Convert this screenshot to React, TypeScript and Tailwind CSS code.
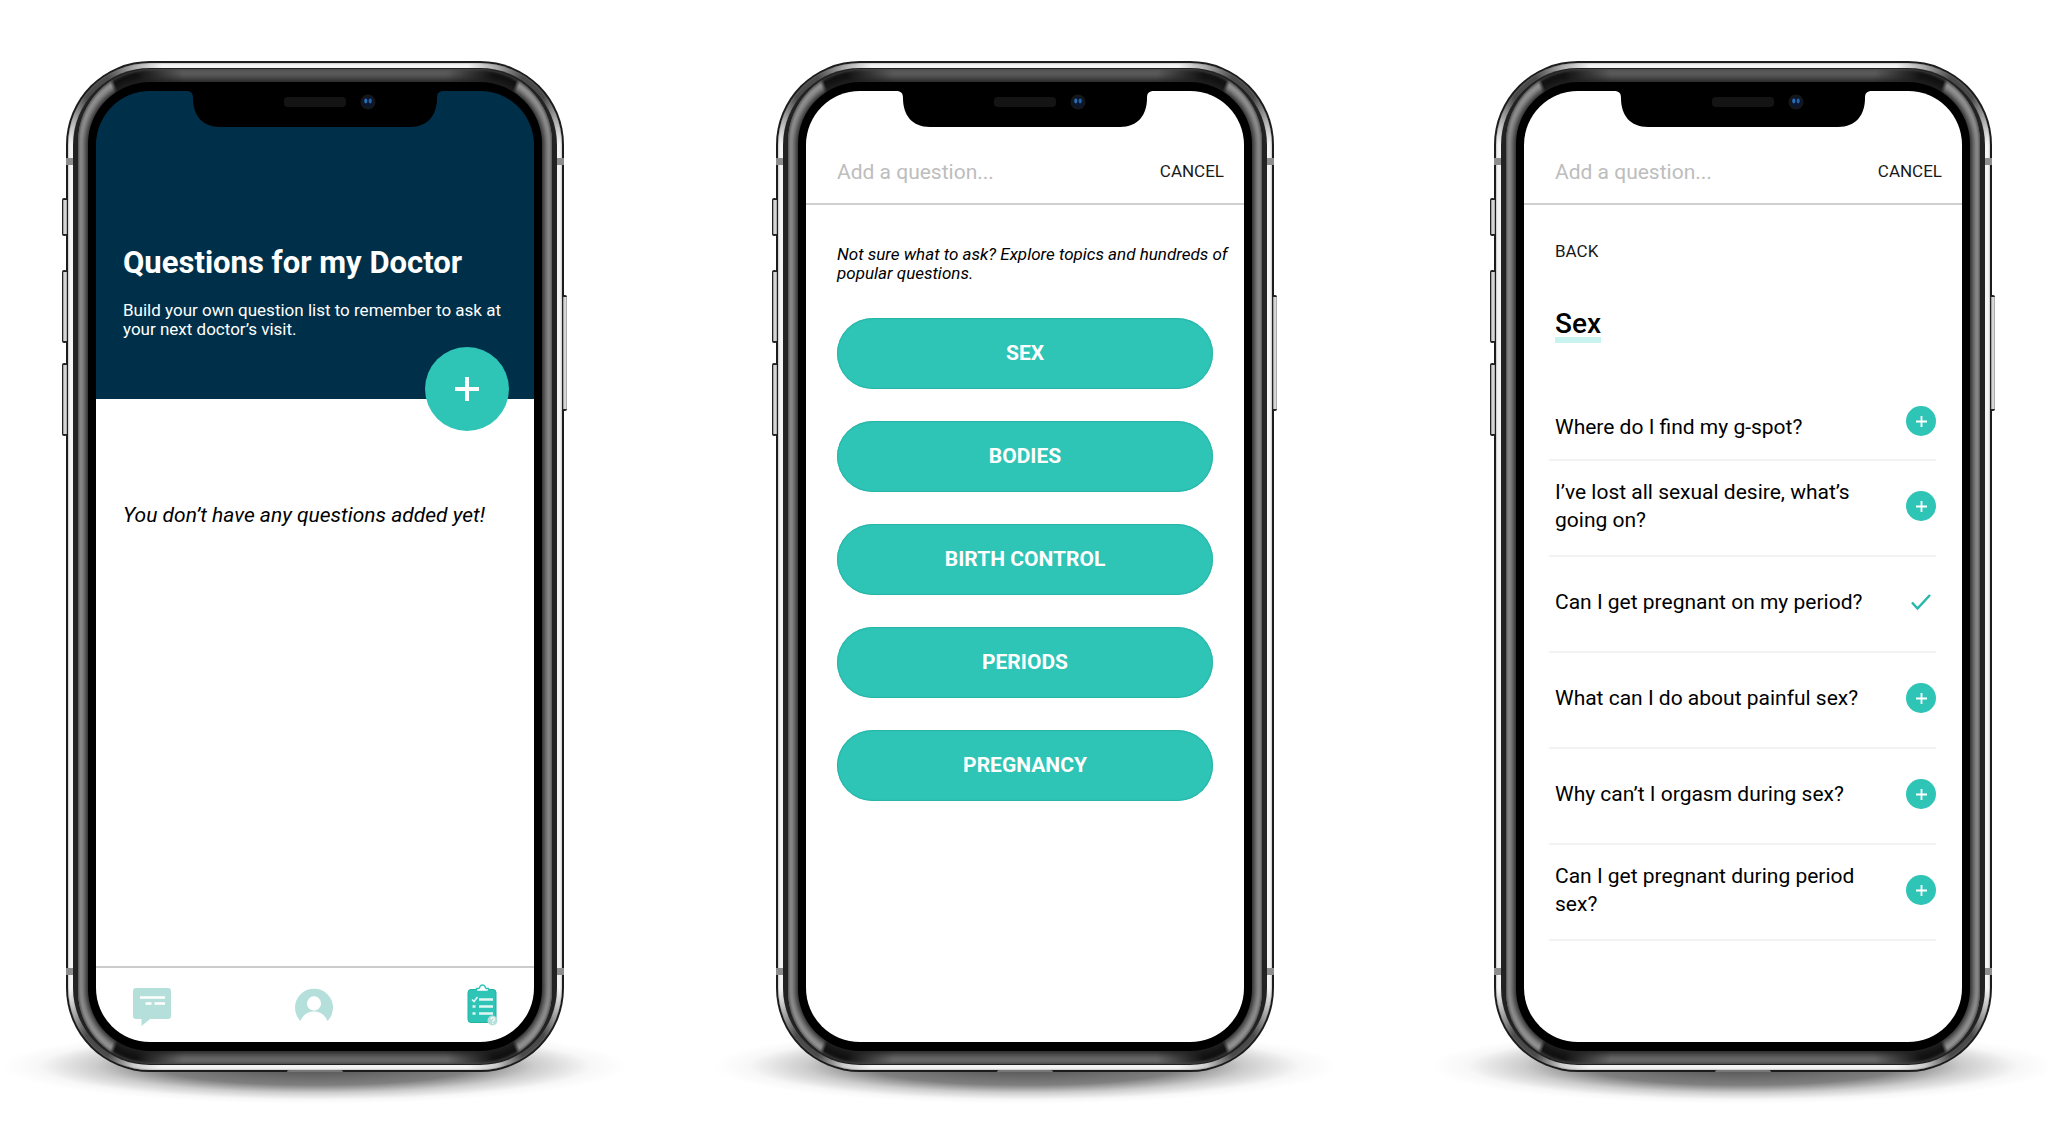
import React from "react";

const topics = ["SEX", "BODIES", "BIRTH CONTROL", "PERIODS", "PREGNANCY"];

const questions = [
  { text: "Where do I find my g-spot?", added: false },
  { text: "I’ve lost all sexual desire, what’s going on?", added: false },
  { text: "Can I get pregnant on my period?", added: true },
  { text: "What can I do about painful sex?", added: false },
  { text: "Why can’t I orgasm during sex?", added: false },
  { text: "Can I get pregnant during period sex?", added: false },
];

function Notch() {
  return (
    <svg className="absolute top-0 left-1/2 h-9 w-[258px] -translate-x-1/2" viewBox="0 0 258 36" aria-hidden="true">
      <path d="M0 0 H258 C253 0 251 2 251 7 C251 24 242 36 224 36 H34 C16 36 7 24 7 7 C7 2 5 0 0 0 Z" fill="#000" />
      <rect x="98" y="6" width="62" height="10" rx="4" fill="#141414" />
      <circle cx="182" cy="11" r="7.5" fill="#15171b" />
      <circle cx="182" cy="11" r="5" fill="#0a1730" />
      <ellipse cx="179.800" cy="10" rx="1.600" ry="2.400" fill="#2a6fb5" />
      <ellipse cx="184.200" cy="10" rx="1.600" ry="2.400" fill="#2461a5" />
    </svg>
  );
}

function SideKey({ place }: { place: string }) {
  return (
    <div
      className={
        "absolute w-[5px] rounded-[2px] border-y-2 border-l border-[#222] bg-linear-to-r from-[#888] via-[#eee] to-[#999] " + place
      }
    />
  );
}

function Phone({ surface, children }: { surface: string; children: React.ReactNode }) {
  return (
    <div className="relative isolate w-full max-w-[498px]">
      <div className="absolute -inset-x-16 -bottom-8 -z-10 h-[76px] bg-[radial-gradient(closest-side,rgba(0,0,0,0.7),rgba(0,0,0,0.5)_50%,rgba(0,0,0,0.2)_70%,rgba(0,0,0,0.03)_88%,transparent)]" />
      <SideKey place="-left-1 top-[137px] h-[38px]" />
      <SideKey place="-left-1 top-[209px] h-[73px]" />
      <SideKey place="-left-1 top-[302px] h-[73px]" />
      <SideKey place="-right-[3px] top-[234px] h-[116px]" />
      <div className="rounded-[84px] bg-[#1c1c1c] p-[2px]">
        <div className="rounded-[82px] bg-[conic-gradient(#f4f4f4_0deg_17deg,#aaa_20deg,#4a4a4a_23deg_26deg,#f4f4f4_30deg_150deg,#4a4a4a_154deg_157deg,#ccc_160deg,#f4f4f4_163deg_197deg,#ccc_200deg,#4a4a4a_203deg_206deg,#f4f4f4_210deg_330deg,#4a4a4a_334deg_337deg,#aaa_340deg,#f4f4f4_343deg)] p-[5px] shadow-[inset_0_0_2px_#777]">
          <div className="rounded-[77px] bg-[#222] px-[5px] py-px">
            <div className="rounded-[73px] bg-[conic-gradient(#5c5c5c_0deg_15deg,#111_20deg_22.5deg,#999_23deg_157deg,#111_157.5deg_160deg,#6a6a6a_165deg_195deg,#111_200deg_202.5deg,#999_203deg_337deg,#111_337.5deg_340deg,#5c5c5c_345deg)] px-[10px] py-[13px] shadow-[inset_0_0_3px_1px_#444]">
              <div className="rounded-[62px] bg-black px-2 py-[9px] shadow-[0_0_6px_3px_#222]">
                <div className={"relative flex h-[951px] flex-col overflow-hidden rounded-[54px] " + surface}>
                  {children}
                  <Notch />
                </div>
              </div>
            </div>
          </div>
        </div>
      </div>
      <div className="absolute top-[97px] left-0 h-[7px] w-[7px] bg-[#8d8d8d]" />
      <div className="absolute top-[97px] right-0 h-[7px] w-[7px] bg-[#8d8d8d]" />
      <div className="absolute bottom-[97px] left-0 h-[7px] w-[7px] bg-[#8d8d8d]" />
      <div className="absolute right-0 bottom-[97px] h-[7px] w-[7px] bg-[#8d8d8d]" />
      <div className="absolute bottom-0 left-1/2 h-[2px] w-14 -translate-x-1/2 rounded-t bg-[#777]" />
    </div>
  );
}

function PlusIcon({ className, weight }: { className: string; weight: number }) {
  return (
    <svg className={className} viewBox="0 0 24 24" fill="none" stroke="#fff" strokeWidth={weight} aria-hidden="true">
      <path d="M12 0V24M0 12H24" />
    </svg>
  );
}

function ChatIcon() {
  return (
    <svg className="h-[38px] w-[38px]" viewBox="0 0 38 38" aria-hidden="true">
      <path d="M3 0H35Q38 0 38 3V28Q38 31 35 31H17L8.500 38V31H3Q0 31 0 28V3Q0 0 3 0Z" fill="#b5dfdb" />
      <path d="M7 9.500H32M12.500 15.500H18.500M21.500 15.500H32" stroke="#fff" strokeWidth="2.500" />
    </svg>
  );
}

function PersonIcon() {
  return (
    <svg className="h-[33px] w-[38px]" viewBox="0 0 38 33" aria-hidden="true">
      <path d="M5.500 33A19 19 0 1 1 32.500 33C30 27 25.500 23.500 19 23.500S8 27 5.500 33Z" fill="#b5dfdb" />
      <ellipse cx="19" cy="15.500" rx="7" ry="7.200" fill="#fff" />
    </svg>
  );
}

function ListIcon() {
  return (
    <svg className="h-[42px] w-[31px]" viewBox="0 0 31 42" aria-hidden="true">
      <rect x="1" y="5.500" width="28" height="33" rx="3" fill="#2ec4b6" stroke="#22b3a5" />
      <path
        d="M9.500 7.500V4.500H12C12.500 4.500 12.500 3.500 13 2.500C14 .5 17 .5 18 2.500C18.500 3.500 18.500 4.500 19 4.500H21.500V7.500Z"
        fill="#fff"
        stroke="#2ec4b6"
        strokeWidth="1.500"
      />
      <path d="M12 15.500H26M12 22.500H26M12 29.500H26" stroke="#e2f7f4" strokeWidth="2.500" />
      <path d="M5 15.500L7 17.500L10.500 13" fill="none" stroke="#e2f7f4" strokeWidth="1.600" />
      <path d="M5.500 22.500H8.500M5.500 29.500H8.500" stroke="#e2f7f4" strokeWidth="2.500" />
      <circle cx="25.500" cy="36.500" r="5" fill="#b5dfdb" />
      <path
        d="M24 35.200C24 33 27.300 33.200 27.300 35.200C27.300 36.500 25.700 36.500 25.700 38M25.700 38.800V39.800"
        fill="none"
        stroke="#fff"
        strokeWidth="1.200"
      />
    </svg>
  );
}

function DoctorScreen() {
  return (
    <Phone surface="bg-transparent">
      <header className="relative flex h-[308px] flex-col bg-[#003049] px-[27px] pt-[152px] text-white">
        <h1 className="text-[31px] leading-10 font-bold">Questions for my Doctor</h1>
        <p className="mt-[18px] text-[17px] leading-[19px]">
          Build your own question list to remember to ask at your next doctor’s visit.
        </p>
        <button
          type="button"
          aria-label="Add a question"
          className="absolute right-[25px] -bottom-8 flex size-[84px] items-center justify-center rounded-full bg-[#2ec4b6]"
        >
          <PlusIcon className="size-6" weight={4} />
        </button>
      </header>
      <p className="grow bg-white px-[27px] pt-[102px] text-[21px] leading-7 italic">
        You don’t have any questions added yet!
      </p>
      <nav className="grid h-[76px] grid-cols-[163fr_163fr_110fr] items-start border-t-2 border-[#ccc] bg-white pl-[37px]">
        <a href="#chat" aria-label="Chat" className="justify-self-start pt-5">
          <ChatIcon />
        </a>
        <a href="#profile" aria-label="Profile" className="justify-self-start pt-5 pl-3">
          <PersonIcon />
        </a>
        <a href="#questions" aria-label="My questions" className="justify-self-end pt-4 pr-9">
          <ListIcon />
        </a>
      </nav>
    </Phone>
  );
}

function AskBar() {
  return (
    <form className="flex h-[114px] shrink-0 items-end justify-between border-b-2 border-[#d0d0d0] pr-5 pb-[15px] pl-[31px]">
      <input
        type="text"
        aria-label="Question"
        placeholder="Add a question..."
        className="h-8 w-60 bg-transparent text-[21px] outline-none placeholder:text-[#bdbdbd]"
      />
      <button type="button" className="h-8 text-[17px] text-[#1a1a1a]">
        CANCEL
      </button>
    </form>
  );
}

function TopicsScreen() {
  return (
    <Phone surface="bg-white">
      <AskBar />
      <p className="pt-10 pr-3 pl-[31px] text-[17px] leading-[19px] italic">
        Not sure what to ask? Explore topics and hundreds of popular questions.
      </p>
      <div className="flex flex-col gap-8 px-[31px] pt-[35px]">
        {topics.map((topic) => (
          <button
            key={topic}
            type="button"
            className="h-[71px] rounded-full bg-[#2ec4b6] text-[21px] font-bold text-white shadow-[inset_0_0_1px_1px_#28b5a8]"
          >
            {topic}
          </button>
        ))}
      </div>
    </Phone>
  );
}

function QuestionsScreen() {
  return (
    <Phone surface="bg-white">
      <AskBar />
      <div className="flex flex-col items-start pr-[26px] pl-[25px]">
        <button type="button" className="mt-[34px] ml-[6px] h-5 text-[17px] text-[#1a1a1a]">
          BACK
        </button>
        <h2 className="mt-[52px] ml-[6px] border-b-6 border-[#c9f3ef] text-[28px] leading-[26px] font-medium">Sex</h2>
        <ul className="mt-10 flex w-full flex-col">
          {questions.map((q, i) => (
            <li
              key={q.text}
              className={
                i === 0
                  ? "flex h-[78px] items-center justify-between border-b-2 border-[#f3f3f3] pl-[6px]"
                  : "flex h-24 items-center justify-between border-b-2 border-[#f3f3f3] pb-1 pl-[6px]"
              }
            >
              <span className={i === 0 ? "w-[315px] pt-3 text-[21px] leading-7" : "w-[315px] text-[21px] leading-7"}>
                {q.text}
              </span>
              {q.added ? (
                <svg
                  className="mr-[5px] h-5 w-5"
                  viewBox="0 0 20 20"
                  fill="none"
                  stroke="#26b8ab"
                  strokeWidth="2.500"
                  role="img"
                  aria-label="Added"
                >
                  <path d="M1 10.500L6.500 16.500L19 3" />
                </svg>
              ) : (
                <button
                  type="button"
                  aria-label={"Add: " + q.text}
                  className="flex size-[30px] items-center justify-center rounded-full bg-[#2ec4b6]"
                >
                  <PlusIcon className="size-[11px]" weight={4} />
                </button>
              )}
            </li>
          ))}
        </ul>
      </div>
    </Phone>
  );
}

export default function App() {
  return (
    <main className="grid min-h-screen grid-cols-[710fr_718fr_554fr] items-start overflow-hidden bg-white pt-[61px] pl-[66px] font-[Roboto,sans-serif] text-black">
      <DoctorScreen />
      <TopicsScreen />
      <QuestionsScreen />
    </main>
  );
}
